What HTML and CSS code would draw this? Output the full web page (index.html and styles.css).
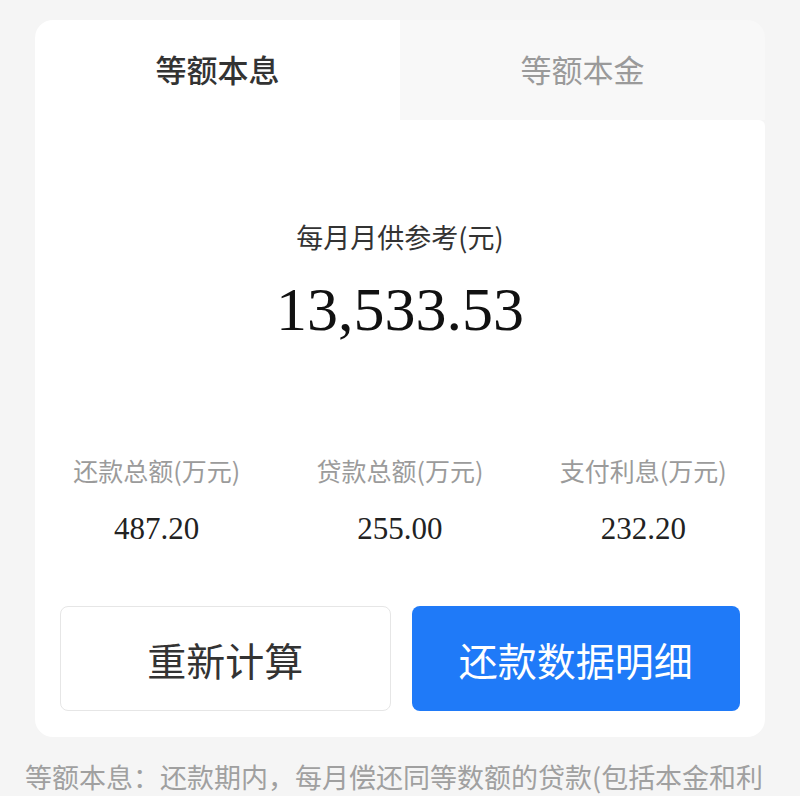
FILE: index.html
```html
<!DOCTYPE html>
<html lang="zh-CN">
<head>
<meta charset="utf-8">
<title>等额本息</title>
<link rel="stylesheet" href="styles.css">
</head>
<body>
<div class="page">
  <div class="card">
    <div class="tabs">
      <div class="tab tab-active">等额本息</div>
      <div class="tab tab-inactive">等额本金</div>
    </div>
    <div class="panel">
      <div class="title">每月月供参考(元)</div>
      <div class="monthly">13,533.53</div>
      <div class="stats">
        <div class="stat">
          <div class="stat-label">还款总额(万元)</div>
          <div class="stat-value">487.20</div>
        </div>
        <div class="stat">
          <div class="stat-label">贷款总额(万元)</div>
          <div class="stat-value">255.00</div>
        </div>
        <div class="stat">
          <div class="stat-label">支付利息(万元)</div>
          <div class="stat-value">232.20</div>
        </div>
      </div>
      <div class="actions">
        <div class="btn btn-outline">重新计算</div>
        <div class="btn btn-primary">还款数据明细</div>
      </div>
    </div>
  </div>
  <p class="note">等额本息：还款期内，每月偿还同等数额的贷款(包括本金和利息)。</p>
</div>
</body>
</html>
```
FILE: styles.css
```css
html, body {
  margin: 0;
  padding: 0;
  background: #f5f5f5;
  height: 100%;
  overflow: hidden;
}
body {
  font-family: "Noto Sans CJK SC", "Noto Sans", sans-serif;
}
.page {
  padding: 20px 35px 0 35px;
}
.card {
  width: 730px;
}
.tabs {
  display: flex;
  height: 100px;
}
.tab {
  flex: 1;
  display: flex;
  align-items: center;
  justify-content: center;
  font-size: 31px;
  padding-bottom: 3px;
  box-sizing: border-box;
}
.tab-active {
  background: #ffffff;
  color: #333333;
  font-weight: 500;
  border-top-left-radius: 18px;
}
.tab-inactive {
  background: #f8f8f8;
  color: #9a9a9a;
  border-top-right-radius: 18px;
}
.panel {
  background: #ffffff;
  border-radius: 0 6px 18px 18px;
  padding: 100px 25px 26px 25px;
}
.title {
  text-align: center;
  font-size: 27px;
  line-height: 34px;
  color: #333333;
}
.monthly {
  margin-top: 20px;
  text-align: center;
  font-family: "Liberation Serif", "Times New Roman", serif;
  font-size: 62px;
  line-height: 70px;
  color: #111111;
}
.stats {
  margin: 111px -25px 0 -25px;
  display: grid;
  grid-template-columns: 1fr 1fr 1fr;
}
.stat {
  text-align: center;
}
.stat-label {
  font-size: 25px;
  line-height: 30px;
  color: #9b9b9b;
}
.stat-value {
  margin-top: 26px;
  font-family: "Liberation Serif", "Times New Roman", serif;
  font-size: 31px;
  line-height: 36px;
  color: #222222;
}
.actions {
  margin-top: 59px;
  display: flex;
  gap: 21px;
}
.btn {
  flex: 1;
  height: 105px;
  box-sizing: border-box;
  border-radius: 8px;
  display: flex;
  align-items: center;
  justify-content: center;
  font-size: 39px;
}
.btn-outline {
  background: #ffffff;
  border: 1px solid #e6e6e6;
  color: #333333;
}
.btn-primary {
  background: #1f7af8;
  color: #ffffff;
}
.note {
  margin: 24px 0 0 -10px;
  width: 770px;
  font-size: 27px;
  line-height: 32px;
  color: #a0a0a0;
}
```
